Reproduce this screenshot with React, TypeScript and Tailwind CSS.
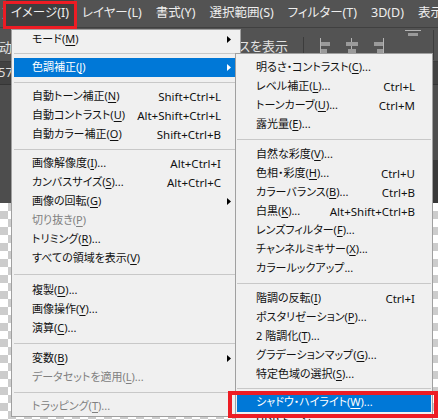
import React from 'react';

type Row =
  | { sep: string }
  | { label: string; sc?: string; arrow?: boolean; active?: boolean; disabled?: boolean };

const MAIN: Row[] = [
  { label: 'モード(&M)', arrow: true },
  { sep: 'h-[9px]' },
  { label: '色調補正(&J)', arrow: true, active: true },
  { sep: 'h-[10px]' },
  { label: '自動トーン補正(&N)', sc: 'Shift+Ctrl+L' },
  { label: '自動コントラスト(&U)', sc: 'Alt+Shift+Ctrl+L' },
  { label: '自動カラー補正(&O)', sc: 'Shift+Ctrl+B' },
  { sep: 'h-[10px]' },
  { label: '画像解像度(&I)...', sc: 'Alt+Ctrl+I' },
  { label: 'カンバスサイズ(&S)...', sc: 'Alt+Ctrl+C' },
  { label: '画像の回転(&G)', arrow: true },
  { label: '切り抜き(&P)', disabled: true },
  { label: 'トリミング(&R)...' },
  { label: 'すべての領域を表示(&V)' },
  { sep: 'h-[13px]' },
  { label: '複製(&D)...' },
  { label: '画像操作(&Y)...' },
  { label: '演算(&C)...' },
  { sep: 'h-[11px]' },
  { label: '変数(&B)', arrow: true },
  { label: 'データセットを適用(&L)...', disabled: true },
  { sep: 'h-[10px]' },
  { label: 'トラッピング(&T)...', disabled: true },
];

const ADJUST: Row[] = [
  { label: '明るさ・コントラスト(&C)...' },
  { label: 'レベル補正(&L)...', sc: 'Ctrl+L' },
  { label: 'トーンカーブ(&U)...', sc: 'Ctrl+M' },
  { label: '露光量(&E)...' },
  { sep: 'h-[11px]' },
  { label: '自然な彩度(&V)...' },
  { label: '色相・彩度(&H)...', sc: 'Ctrl+U' },
  { label: 'カラーバランス(&B)...', sc: 'Ctrl+B' },
  { label: '白黒(&K)...', sc: 'Alt+Shift+Ctrl+B' },
  { label: 'レンズフィルター(&F)...' },
  { label: 'チャンネルミキサー(&X)...' },
  { label: 'カラールックアップ...' },
  { sep: 'h-[11px]' },
  { label: '階調の反転(&I)', sc: 'Ctrl+I' },
  { label: 'ポスタリゼーション(&P)...' },
  { label: '2 階調化(&T)...' },
  { label: 'グラデーションマップ(&G)...' },
  { label: '特定色域の選択(&S)...' },
  { sep: 'h-[9px]' },
  { label: 'シャドウ・ハイライト(&W)...', active: true },
  { label: 'HDR トーン...' },
];

// "画像(&I)" -> 画像( + underlined I + )
const Label = ({ text }: { text: string }) => {
  const i = text.indexOf('&');
  if (i < 0) return <span>{text}</span>;
  return (
    <span>
      {text.slice(0, i)}
      <span className="underline decoration-1 underline-offset-[2px]">{text[i + 1]}</span>
      {text.slice(i + 2)}
    </span>
  );
};

const Arrow = ({ white }: { white?: boolean }) => (
  <svg width="4" height="7" viewBox="0 0 4 7">
    <polygon points="0,0 4,3.5 0,7" fill={white ? '#ffffff' : '#000000'} />
  </svg>
);

const Menu = ({ rows, sub }: { rows: Row[]; sub?: boolean }) => (
  <div className="flex flex-col">
    {rows.map((r, i) => {
      if ('sep' in r) {
        return (
          <div key={i} className={`${r.sep} flex items-center`}>
            <div className="w-full h-px bg-[#c8c8c8]" />
          </div>
        );
      }
      const color = r.active ? 'bg-[#0078d7] text-white' : r.disabled ? 'text-[#808080]' : 'text-[#111111]';
      return (
        <div
          key={i}
          className={`h-[19px] flex items-center whitespace-nowrap ${color} ${sub ? 'pl-[19px] pr-[16px]' : 'pl-[18px]'}`}
        >
          <div className="flex-1 text-[11px]">
            <Label text={r.label} />
          </div>
          {r.sc && <div className="shrink-0 text-[11.5px]">{r.sc}</div>}
          {!sub && (
            <div className="shrink-0 w-[15px] flex justify-center pl-[1px]">{r.arrow && <Arrow white={r.active} />}</div>
          )}
        </div>
      );
    })}
  </div>
);

const AlignIcon = ({ kind }: { kind: number }) => (
  <svg width="14" height="18" viewBox="0 0 14 18" className="shrink-0">
    {kind === 0 && (
      <>
        <rect x="1" y="0" width="1" height="18" fill="#b4b4b4" />
        <rect x="2" y="4" width="9" height="4" fill="#9a9a9a" />
        <rect x="2" y="11" width="6" height="4" fill="#9a9a9a" />
      </>
    )}
    {kind === 1 && (
      <>
        <rect x="6" y="0" width="1" height="18" fill="#b4b4b4" />
        <rect x="1" y="4" width="12" height="4" fill="#9a9a9a" />
        <rect x="3" y="11" width="8" height="4" fill="#9a9a9a" />
      </>
    )}
    {kind === 2 && (
      <>
        <rect x="12" y="0" width="1" height="18" fill="#b4b4b4" />
        <rect x="3" y="4" width="9" height="4" fill="#9a9a9a" />
        <rect x="6" y="11" width="6" height="4" fill="#9a9a9a" />
      </>
    )}
  </svg>
);

const MENUBAR = ['レイヤー(L)', '書式(Y)', '選択範囲(S)', 'フィルター(T)', '3D(D)', '表示(V)'];

export default function App() {
  return (
    <div className="relative w-[438px] h-[420px] overflow-hidden bg-[#4a4a4a] font-['Noto_Sans','Noto_Sans_CJK_JP',sans-serif] text-[12px] [font-feature-settings:'palt']">
      {/* application chrome */}
      <div className="flex flex-col h-full">
        <div className="h-[28px] shrink-0 flex items-center bg-[#535353] text-[12.5px] text-[#eeeeee] whitespace-nowrap border-b border-[#404040]">
          <span className="shrink-0 w-[6px] overflow-hidden flex justify-end">)</span>
          <div className="shrink-0 h-[28px] w-[68px] flex items-center justify-center bg-[#3f3f3f]">イメージ(I)</div>
          <div className="shrink-0 flex gap-[14px] ml-[8px]">
            {MENUBAR.map((m) => (
              <span key={m} className="shrink-0">{m}</span>
            ))}
          </div>
        </div>

        <div className="h-[34px] shrink-0 flex items-start bg-[#535353] text-[13px] text-[#e2e2e2] whitespace-nowrap border-b border-[#3c3c3c]">
          <span className="shrink-0 ml-[-1px] w-[154px] pt-[10px]">动选择</span>
          <div className="shrink-0 w-[135px] flex justify-end overflow-hidden pt-[9px]">
            <span className="shrink-0">バウンディングボックスを表示</span>
          </div>
          <div className="shrink-0 ml-[15px] w-px h-[20px] bg-[#3c3c3c] mt-[9px]" />
          <div className="shrink-0 flex gap-[12px] ml-[15px] mt-[10px]">
            <AlignIcon kind={0} />
            <AlignIcon kind={1} />
            <AlignIcon kind={2} />
          </div>
          <svg width="16" height="8" viewBox="0 0 16 8" className="shrink-0 ml-[20px] mt-[2px]">
            <rect x="0" y="0" width="16" height="1" fill="#b4b4b4" />
            <rect x="3" y="3" width="10" height="3" fill="#9a9a9a" />
          </svg>
          <div className="shrink-0 ml-[12px] w-px h-[30px] bg-[#3c3c3c] mt-[2px]" />
        </div>

        <div className="h-[23px] shrink-0 flex items-center bg-[#424242] text-[13px] text-[#dddddd] whitespace-nowrap border-b border-[#353535]">
          <span className="ml-[-2px]">57</span>
        </div>

        <div className="h-[118px] shrink-0 bg-[#4d4d4d] flex justify-end">
          <div className="w-[5px] mt-[75px] bg-[#383838]" />
        </div>

        <div className="flex-1 bg-[repeating-conic-gradient(#cccccc_0_25%,#ffffff_0_50%)] bg-[length:16px_16px]" />
      </div>

      {/* image menu */}
      <div className="absolute left-[11px] top-[29px] w-[230px] bg-[#f0f0f0] border border-[#a0a0a0] pl-[2px] pr-[4px]">
        <Menu rows={MAIN} />
      </div>

      {/* adjustments submenu */}
      <div className="absolute left-[235px] top-[53px] w-[198px] bg-[#f0f0f0] border border-[#a0a0a0] px-[1px] pt-[4px]">
        <Menu rows={ADJUST} sub />
      </div>

      {/* annotations */}
      <div className="absolute left-[3px] top-[1px] w-[74px] h-[28px] border-[3px] border-[#ed1c24]" />
      <div className="absolute left-[228px] top-[391px] w-[210px] h-[27px] border-[4px] border-[#ed1c24]" />
    </div>
  );
}
